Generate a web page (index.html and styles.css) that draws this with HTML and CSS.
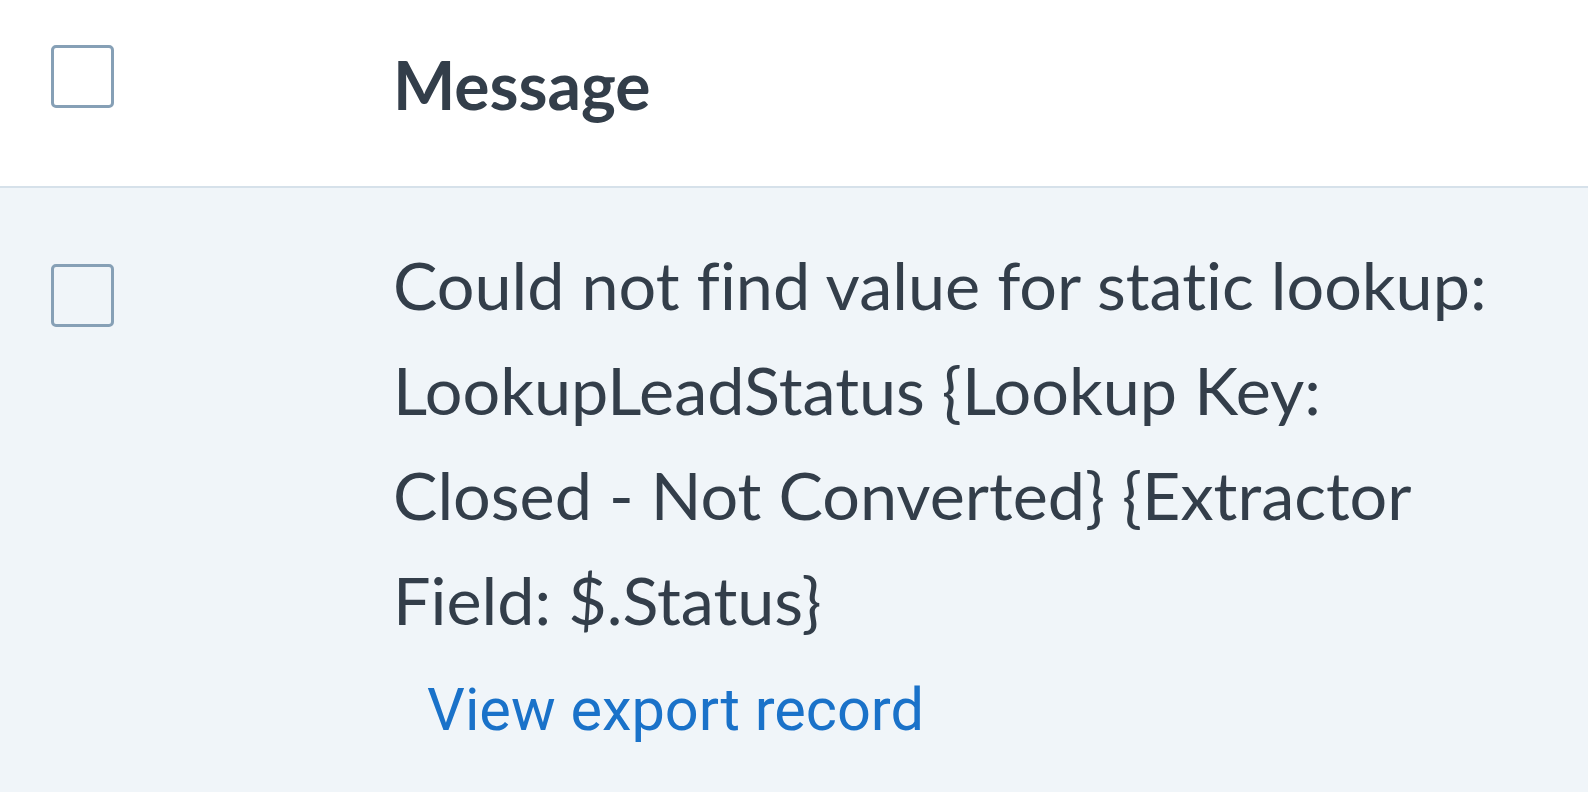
FILE: index.html
```html
<!DOCTYPE html>
<html lang="en">
<head>
  <meta charset="UTF-8" />
  <title>Errors</title>
  <link rel="stylesheet" href="styles.css">
</head>
<body>
  <div class="table">
    <div class="row head">
      <div class="cell check"><span class="box"></span></div>
      <div class="cell message">Message</div>
    </div>
    <div class="row item">
      <div class="cell check"><span class="box"></span></div>
      <div class="cell message">
        <div class="text">Could not find value for static lookup: LookupLeadStatus {Lookup Key: Closed - Not Converted} {Extractor Field: $.Status}</div>
        <a class="link" href="#">View export record</a>
      </div>
    </div>
  </div>
</body>
</html>
```

FILE: styles.css
```css
body {
  margin: 0;
  background: #f0f5f9;
  color: #333e4a;
  font-family: Lato, "Noto Sans", sans-serif;
  font-variant-ligatures: none;
}
.table {
  width: 100%;
}
.row {
  display: flex;
}
.head {
  background: #fff;
  height: 186px;
  border-bottom: 2px solid #d6e1ea;
}
.item {
  background: #f0f5f9;
}
.cell.check {
  width: 393px;
  padding-left: 51px;
  box-sizing: border-box;
}
.head .check {
  padding-top: 45px;
}
.item .check {
  padding-top: 76px;
}
.box {
  display: block;
  width: 63px;
  height: 63px;
  box-sizing: border-box;
  border: 3px solid #86a0b6;
  border-radius: 5px;
}
.head .message {
  font-size: 66px;
  font-weight: bold;
  padding-top: 40px;
  line-height: 90px;
}
.item .message {
  width: 1140px;
  font-size: 66.5px;
  line-height: 105px;
  padding-top: 44px;
}
.link {
  display: inline-block;
  margin-left: 34px;
  margin-top: 8px;
  font-family: Roboto, sans-serif;
  font-size: 59.5px;
  line-height: 80px;
  color: #1a72c9;
  text-decoration: none;
}
```
